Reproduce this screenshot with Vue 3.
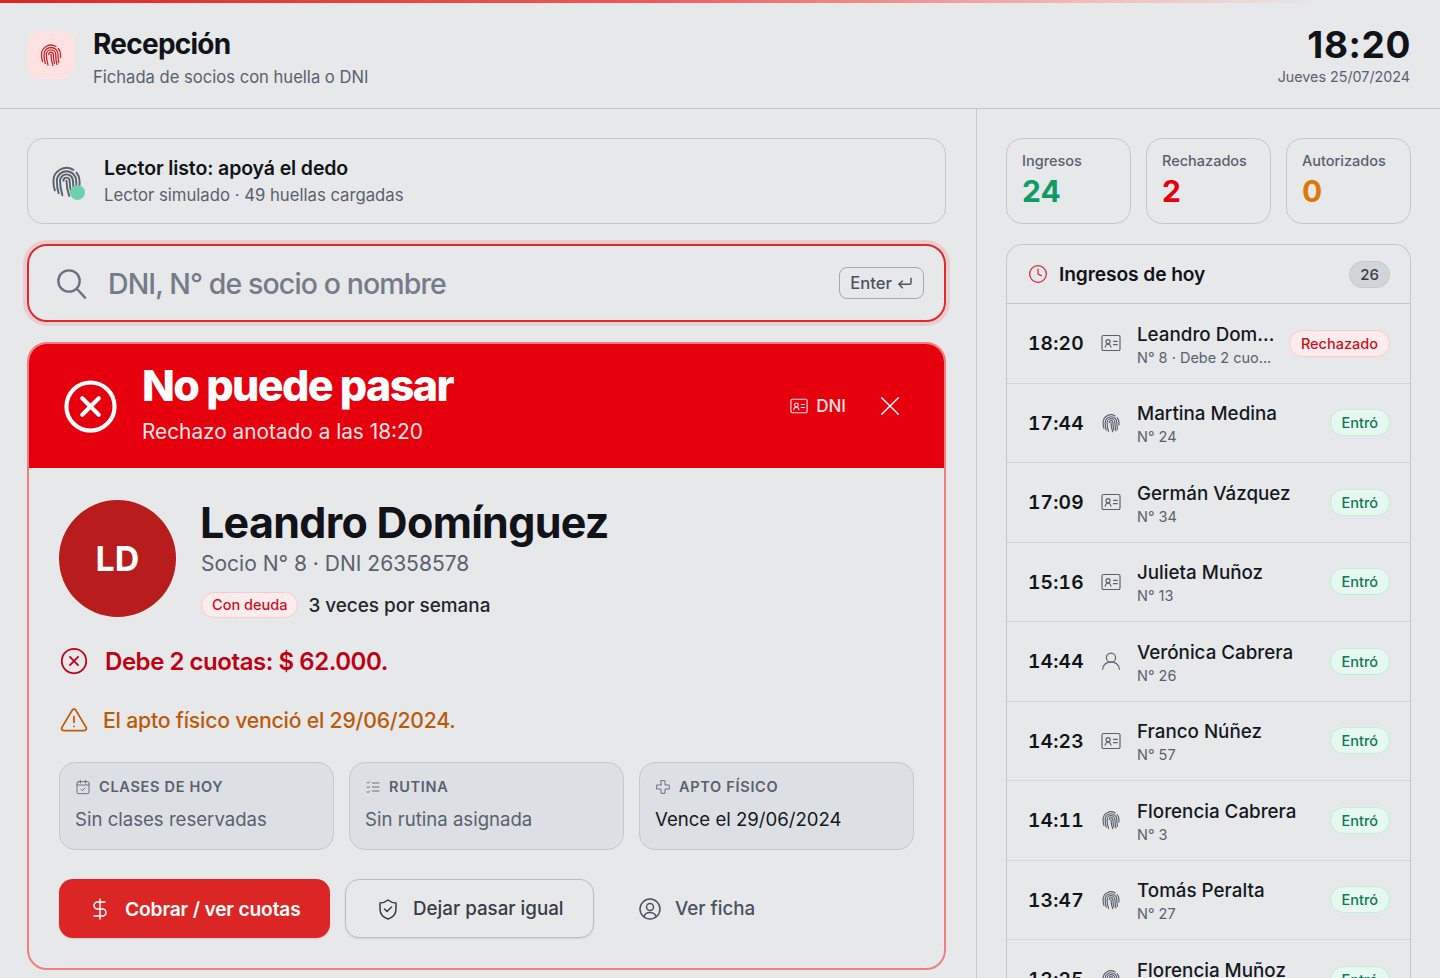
<template>
  <div class="page">
    <header class="top">
      <div class="brand">
        <div class="brand-icon">
          <svg viewBox="0 0 24 24" class="fp"><path v-for="d in fingerprint" :key="d" :d="d" /></svg>
        </div>
        <div>
          <h1>Recepción</h1>
          <p>Fichada de socios con huella o DNI</p>
        </div>
      </div>
      <div class="clock">
        <div class="clock-time">18:20</div>
        <div class="clock-date">Jueves 25/07/2024</div>
      </div>
    </header>

    <div class="layout">
      <main class="main">
        <section class="reader">
          <div class="reader-icon">
            <svg viewBox="0 0 24 24" class="fp"><path v-for="d in fingerprint" :key="d" :d="d" /></svg>
            <span class="dot"></span>
          </div>
          <div>
            <div class="reader-title">Lector listo: apoyá el dedo</div>
            <div class="reader-sub">Lector simulado · 49 huellas cargadas</div>
          </div>
        </section>

        <section class="search">
          <svg viewBox="0 0 24 24" class="search-icon"><circle cx="10.500" cy="10.500" r="8" /><path d="m16.500 16.500 6 6.500" /></svg>
          <span class="search-text">DNI, N° de socio o nombre</span>
          <span class="kbd">Enter
            <svg viewBox="0 0 24 24"><path d="M21 5v7a2 2 0 0 1-2 2H3" /><path d="m8 9-5 5 5 5" /></svg>
          </span>
        </section>

        <section class="result">
          <div class="banner">
            <svg viewBox="0 0 24 24" class="banner-icon"><circle cx="12" cy="12" r="10.500" /><path d="m15.600 8.400-7.200 7.200M8.400 8.400l7.200 7.200" /></svg>
            <div class="banner-text">
              <div class="banner-title">No puede pasar</div>
              <div class="banner-sub">Rechazo anotado a las 18:20</div>
            </div>
            <div class="banner-via">
              <svg viewBox="0 0 24 24"><path v-for="d in idCard" :key="d" :d="d" /></svg>
              DNI
            </div>
            <svg viewBox="0 0 24 24" class="banner-close"><path d="M2 2l20 20M22 2 2 22" /></svg>
          </div>

          <div class="body">
            <div class="member">
              <div class="avatar">LD</div>
              <div>
                <h2>Leandro Domínguez</h2>
                <div class="member-sub">Socio N° 8 · DNI 26358578</div>
                <div class="member-tags">
                  <span class="tag">Con deuda</span>
                  <span class="plan">3 veces por semana</span>
                </div>
              </div>
            </div>

            <div class="warn warn-red">
              <svg viewBox="0 0 24 24"><circle cx="12" cy="12" r="10.500" /><path d="m15.500 8.500-7 7M8.500 8.500l7 7" /></svg>
              Debe 2 cuotas: $ 62.000.
            </div>
            <div class="warn warn-orange">
              <svg viewBox="0 0 24 24"><path d="m22.500 18.500-9-15a1.800 1.800 0 0 0-3 0l-9 15A1.800 1.800 0 0 0 3 21h18a1.800 1.800 0 0 0 1.500-2.500" /><path d="M12 9v5M12 17.500h.01" /></svg>
              El apto físico venció el 29/06/2024.
            </div>

            <div class="infos">
              <div class="info">
                <div class="info-label">
                  <svg viewBox="0 0 24 24"><rect x="3" y="4" width="18" height="18" rx="2" /><path d="M8 2v4M16 2v4M3 9h18M9 15.500l2 2 4-4" /></svg>
                  CLASES DE HOY
                </div>
                <div class="info-value muted">Sin clases reservadas</div>
              </div>
              <div class="info">
                <div class="info-label">
                  <svg viewBox="0 0 24 24"><path d="m3 5 1.500 1.500L7 4M3 12l1.500 1.500L7 11M3 19l1.500 1.500L7 18M11 6h10M11 12h10M11 18h10" /></svg>
                  RUTINA
                </div>
                <div class="info-value muted">Sin rutina asignada</div>
              </div>
              <div class="info">
                <div class="info-label">
                  <svg viewBox="0 0 24 24"><path d="M9 2.500h6v6.500h6.500v6H15v6.500H9V15H2.500V9H9z" /></svg>
                  APTO FÍSICO
                </div>
                <div class="info-value">Vence el 29/06/2024</div>
              </div>
            </div>

            <div class="actions">
              <button class="btn btn-red">
                <svg viewBox="0 0 24 24"><path d="M12 2v20M17 5H9.500a3.500 3.500 0 0 0 0 7h5a3.500 3.500 0 0 1 0 7H6" /></svg>
                Cobrar / ver cuotas
              </button>
              <button class="btn btn-outline">
                <svg viewBox="0 0 24 24"><path d="M4 6c3 0 5.500-1 8-3 2.500 2 5 3 8 3v6c0 5-3.500 8.500-8 10-4.500-1.500-8-5-8-10z" /><path d="m8.500 12 2.500 2.500 4.500-4.500" /></svg>
                Dejar pasar igual
              </button>
              <button class="btn btn-ghost">
                <svg viewBox="0 0 24 24"><circle cx="12" cy="12" r="10" /><circle cx="12" cy="10" r="3.500" /><path d="M6 19.500c.8-2.500 3.200-4 6-4s5.200 1.500 6 4" /></svg>
                Ver ficha
              </button>
            </div>
          </div>
        </section>
      </main>

      <aside class="side">
        <div class="stats">
          <div v-for="s in stats" :key="s.label" class="stat">
            <div class="stat-label">{{ s.label }}</div>
            <div class="stat-value" :class="s.cls">{{ s.value }}</div>
          </div>
        </div>

        <section class="today">
          <div class="today-head">
            <svg viewBox="0 0 24 24"><circle cx="12" cy="12" r="10" /><path d="M12 6v6l4 2" /></svg>
            <span class="today-title">Ingresos de hoy</span>
            <span class="count">26</span>
          </div>
          <div v-for="r in rows" :key="r.time + r.name" class="row">
            <span class="row-time">{{ r.time }}</span>
            <svg v-if="r.via === 'fp'" viewBox="0 0 24 24" class="row-icon"><path v-for="d in fingerprint" :key="d" :d="d" /></svg>
            <svg v-else-if="r.via === 'dni'" viewBox="0 0 24 24" class="row-icon"><path v-for="d in idCard" :key="d" :d="d" /></svg>
            <svg v-else viewBox="0 0 24 24" class="row-icon"><circle cx="12" cy="8" r="5.500" /><path d="M2 22a10 9 0 0 1 20 0" /></svg>
            <div class="row-who">
              <div class="row-name">{{ r.name }}</div>
              <div class="row-sub">{{ r.sub }}</div>
            </div>
            <span class="pill" :class="r.rejected ? 'pill-red' : 'pill-green'">{{ r.rejected ? 'Rechazado' : 'Entró' }}</span>
          </div>
        </section>
      </aside>
    </div>
  </div>
</template>

<script setup>
const fingerprint = [
  'M3.500 18.500C2.800 16.500 2.500 14 2.500 11.500a9.500 9.500 0 0 1 14.500-8',
  'M19.300 5.500a9.500 9.500 0 0 1 2.200 6v3',
  'M6.300 20.500c-1-3-1.300-6-1.300-9a7 7 0 0 1 14 0c0 3 .2 5.500.8 8',
  'M9 22c-1-3.500-1.700-7-1.700-10.500a4.700 4.700 0 0 1 9.400 0c0 3.500.4 7 1.300 10',
  'M12 11.500c0 3.700.6 7.300 2 11',
  'M9.800 11.500c0-1.300 1-2.300 2.200-2.300s2.300 1 2.300 2.300c0 3 .3 6 1.200 9'
]

const idCard = [
  'M3 3h18a1.800 1.800 0 0 1 1.800 1.800v14.400A1.800 1.800 0 0 1 21 21H3a1.800 1.800 0 0 1-1.800-1.800V4.800A1.800 1.800 0 0 1 3 3z',
  'M8.500 8a2.500 2.500 0 1 1 0 5 2.500 2.500 0 0 1 0-5z',
  'M5 17c.5-2.200 1.800-3.500 3.500-3.500S11.500 14.800 12 17',
  'M15 10h4.500M15 14h4.500'
]

const stats = [
  { label: 'Ingresos', value: '24', cls: 'green' },
  { label: 'Rechazados', value: '2', cls: 'red' },
  { label: 'Autorizados', value: '0', cls: 'orange' }
]

const rows = [
  { time: '18:20', via: 'dni', name: 'Leandro Dom...', sub: 'N° 8 · Debe 2 cuo...', rejected: true },
  { time: '17:44', via: 'fp', name: 'Martina Medina', sub: 'N° 24' },
  { time: '17:09', via: 'dni', name: 'Germán Vázquez', sub: 'N° 34' },
  { time: '15:16', via: 'dni', name: 'Julieta Muñoz', sub: 'N° 13' },
  { time: '14:44', via: 'user', name: 'Verónica Cabrera', sub: 'N° 26' },
  { time: '14:23', via: 'dni', name: 'Franco Núñez', sub: 'N° 57' },
  { time: '14:11', via: 'fp', name: 'Florencia Cabrera', sub: 'N° 3' },
  { time: '13:47', via: 'fp', name: 'Tomás Peralta', sub: 'N° 27' },
  { time: '13:25', via: 'fp', name: 'Florencia Muñoz', sub: 'N° 41' }
]
</script>

<style>
html, body {
  margin: 0;
  background: #e6e8ea;
}
</style>

<style scoped>
.page {
  height: 978px;
  overflow: hidden;
  display: flex;
  flex-direction: column;
  background: #e6e8ea;
  color: #111318;
  font-family: Inter, "Liberation Sans", sans-serif;
  position: relative;
}
.page::before {
  content: "";
  position: absolute;
  top: 0;
  left: 0;
  right: 0;
  height: 3px;
  background: linear-gradient(90deg, #dc2626 0%, #ee5a5a 45%, #f3b9b9 75%, #e6e8ea 92%);
}
svg {
  fill: none;
  stroke: currentColor;
  stroke-width: 1.7;
  stroke-linecap: round;
  stroke-linejoin: round;
  flex: none;
}
h1, h2, p {
  margin: 0;
}
.top {
  height: 109px;
  box-sizing: border-box;
  border-bottom: 1px solid #c4c7cc;
  display: flex;
  align-items: center;
  justify-content: space-between;
  padding: 7px 30px 0 27px;
  flex: none;
}
.brand {
  display: flex;
  align-items: center;
  gap: 18px;
}
.brand-icon {
  width: 48px;
  height: 48px;
  margin-bottom: 5px;
  border-radius: 13px;
  background: #fee2e2;
  border: 1px solid #fde5e5;
  box-sizing: border-box;
  display: flex;
  align-items: center;
  justify-content: center;
  color: #c6262b;
}
.brand-icon svg {
  width: 24px;
  height: 24px;
  stroke-width: 1.300;
}
h1 {
  font-size: 28px;
  line-height: 34px;
  font-weight: 700;
  letter-spacing: -0.75px;
}
.brand p {
  margin-top: 4px;
  font-size: 16.600px;
  line-height: 24px;
  color: #5a616d;
}
.clock {
  text-align: right;
  margin-bottom: 3px;
}
.clock-time {
  font-size: 37px;
  line-height: 40px;
  font-weight: 700;
  letter-spacing: 0.6px;
  margin-right: -1px;
}
.clock-date {
  margin-top: 2px;
  font-size: 14.300px;
  line-height: 20px;
  color: #5a616d;
}
.layout {
  flex: 1;
  display: flex;
  min-height: 0;
}
.main {
  width: 977px;
  box-sizing: border-box;
  flex: none;
  border-right: 1px solid #c4c7cc;
  padding: 29px 30px 0 27px;
  display: flex;
  flex-direction: column;
  gap: 20px;
}
.reader {
  height: 86px;
  box-sizing: border-box;
  border: 1px solid #c4c7cc;
  border-radius: 16px;
  display: flex;
  align-items: center;
  gap: 21px;
  padding: 0 22px;
}
.reader-icon {
  position: relative;
  width: 33px;
  height: 33px;
  color: #5a616d;
  margin-top: 1px;
}
.reader-icon svg {
  width: 33px;
  height: 33px;
  display: block;
  stroke-width: 1.400;
}
.dot {
  position: absolute;
  right: -2px;
  bottom: -2px;
  width: 15px;
  height: 15px;
  border-radius: 50%;
  background: #6ed0ac;
}
.reader-title {
  font-size: 19.500px;
  line-height: 28px;
  font-weight: 600;
  letter-spacing: -0.12px;
}
.reader-sub {
  font-size: 16.700px;
  line-height: 26px;
  color: #5a616d;
}
.search {
  height: 78px;
  box-sizing: border-box;
  border: 2px solid #dc2a2e;
  border-radius: 20px;
  box-shadow: 0 0 0 4px #e9cdd0;
  display: flex;
  align-items: center;
  padding: 0 20px 0 26px;
}
.search-icon {
  width: 32px;
  height: 32px;
  color: #6b7280;
  stroke-width: 1.800;
}
.search-text {
  margin-left: 21px;
  font-size: 28.500px;
  font-weight: 500;
  color: #757b89;
  letter-spacing: -0.9px;
  flex: 1;
}
.kbd {
  height: 32px;
  box-sizing: border-box;
  border: 1px solid #a4a8af;
  border-radius: 8px;
  padding: 0 10px;
  display: flex;
  align-items: center;
  gap: 5px;
  font-size: 16.600px;
  font-weight: 500;
  color: #4b5260;
}
.kbd svg {
  width: 16px;
  height: 16px;
  stroke-width: 2.200;
}
.result {
  height: 628px;
  box-sizing: border-box;
  border: 2px solid #f07f7f;
  border-radius: 20px;
  overflow: hidden;
}
.banner {
  height: 124px;
  background: #e6000d;
  color: #fff;
  display: flex;
  align-items: center;
  padding: 0 44px 0 34px;
}
.banner-icon {
  width: 55px;
  height: 55px;
  stroke-width: 1.800;
}
.banner-text {
  margin-left: 24px;
  flex: 1;
}
.banner-title {
  font-size: 43px;
  line-height: 50px;
  font-weight: 800;
  letter-spacing: -1.600px;
  margin-top: -6px;
}
.banner-sub {
  font-size: 20.800px;
  line-height: 30px;
  margin-top: 7px;
  color: #fde5e5;
}
.banner-via {
  display: flex;
  align-items: center;
  gap: 8px;
  font-size: 17px;
  font-weight: 500;
  margin-right: 34px;
  color: #fee2e2;
}
.banner-via svg {
  width: 18px;
  height: 18px;
  stroke-width: 1.500;
}
.banner-close {
  width: 20px;
  height: 20px;
  stroke-width: 1.700;
}
.body {
  padding: 32px 30px 0 30px;
}
.member {
  display: flex;
  align-items: flex-start;
  gap: 25px;
}
.avatar {
  width: 117px;
  height: 117px;
  border-radius: 50%;
  background: #b91c1c;
  color: #fff;
  display: flex;
  align-items: center;
  justify-content: center;
  font-size: 34px;
  font-weight: 700;
  flex: none;
}
h2 {
  font-size: 43px;
  line-height: 46px;
  font-weight: 700;
  letter-spacing: -0.7px;
  margin-left: -1px;
  margin-top: -1px;
}
.member-sub {
  margin-top: 4px;
  font-size: 21px;
  line-height: 30px;
  color: #5a616d;
}
.member-tags {
  margin-top: 13px;
  display: flex;
  align-items: center;
  gap: 10px;
}
.tag {
  height: 26px;
  box-sizing: border-box;
  padding: 0 10px;
  border: 1px solid #fecaca;
  background: #fdeced;
  border-radius: 13px;
  font-size: 14.500px;
  line-height: 24px;
  font-weight: 500;
  color: #c9101b;
}
.plan {
  font-size: 18.900px;
  font-weight: 500;
  color: #22262e;
}
.warn {
  display: flex;
  align-items: center;
}
.warn svg {
  width: 28px;
  height: 28px;
  margin-left: 1px;
  stroke-width: 1.500;
}
.warn-red {
  margin-top: 25px;
  height: 36px;
  gap: 17px;
  font-size: 24px;
  font-weight: 600;
  letter-spacing: -0.45px;
  color: #c00013;
}
.warn-orange {
  margin-top: 23px;
  height: 36px;
  gap: 15px;
  font-size: 21.200px;
  font-weight: 500;
  letter-spacing: -0.2px;
  color: #bd5a08;
}
.infos {
  margin-top: 24px;
  display: grid;
  grid-template-columns: repeat(3, 1fr);
  gap: 15px;
}
.info {
  height: 88px;
  box-sizing: border-box;
  border: 1px solid #c4c7cc;
  border-radius: 16px;
  background: #dcdfe4;
  padding: 14px 15px;
}
.info-label {
  display: flex;
  align-items: center;
  gap: 8px;
  font-size: 14.500px;
  line-height: 20px;
  font-weight: 600;
  letter-spacing: 0.7px;
  color: #5a616d;
}
.info-label svg {
  width: 16px;
  height: 16px;
  stroke-width: 1.300;
}
.info-value {
  margin-top: 8px;
  font-size: 18.600px;
  line-height: 28px;
  color: #15181e;
}
.info-value.muted {
  color: #5a616d;
}
.actions {
  margin-top: 29px;
  display: flex;
  align-items: center;
  gap: 15px;
}
.btn {
  height: 59px;
  box-sizing: border-box;
  border-radius: 14px;
  border: 1px solid transparent;
  display: flex;
  align-items: center;
  font-family: inherit;
  font-size: 18.750px;
  font-weight: 500;
  background: none;
  padding: 0;
}
.btn svg {
  width: 24px;
  height: 24px;
  stroke-width: 1.500;
}
.btn-red {
  width: 271px;
  background: #dc2626;
  color: #fff;
  font-size: 19.300px;
  font-weight: 600;
  letter-spacing: -0.2px;
  gap: 13px;
  padding-left: 28px;
  box-shadow: 0 1px 2px rgba(0, 0, 0, 0.12);
}
.btn-outline {
  width: 249px;
  border-color: #b9bcc2;
  color: #373c45;
  gap: 13px;
  padding-left: 30px;
  box-shadow: 0 1px 2px rgba(0, 0, 0, 0.1);
}
.btn-ghost {
  color: #4b5260;
  gap: 13px;
  padding-left: 28px;
}
.side {
  flex: 1;
  min-width: 0;
  padding: 29px 29px 0 29px;
}
.stats {
  display: grid;
  grid-template-columns: repeat(3, 1fr);
  gap: 15px;
}
.stat {
  height: 86px;
  box-sizing: border-box;
  border: 1px solid #c4c7cc;
  border-radius: 16px;
  padding: 12px 15px;
}
.stat-label {
  font-size: 14.500px;
  line-height: 20px;
  font-weight: 500;
  color: #5a616d;
}
.stat-value {
  margin-top: 3px;
  font-size: 30px;
  line-height: 34px;
  font-weight: 700;
}
.green {
  color: #0f9a66;
}
.red {
  color: #e6000d;
}
.orange {
  color: #dd7706;
}
.today {
  margin-top: 20px;
  border: 1px solid #c4c7cc;
  border-bottom: 0;
  border-radius: 16px 16px 0 0;
}
.today-head {
  height: 59px;
  box-sizing: border-box;
  display: flex;
  align-items: center;
  padding: 0 20px 0 21px;
  border-bottom: 1px solid #c4c7cc;
}
.today-head svg {
  width: 20px;
  height: 20px;
  color: #d12a30;
  stroke-width: 1.500;
}
.today-title {
  margin-left: 11px;
  flex: 1;
  font-size: 19.200px;
  font-weight: 600;
  letter-spacing: -0.1px;
}
.count {
  width: 41px;
  height: 27px;
  box-sizing: border-box;
  border: 1px solid #c4c7cc;
  border-radius: 14px;
  background: #d1d5da;
  text-align: center;
  font-size: 15px;
  line-height: 25px;
  font-weight: 500;
  color: #373c45;
}
.row {
  height: 79.500px;
  box-sizing: border-box;
  border-bottom: 1px solid #d2d5da;
  display: flex;
  align-items: center;
  padding: 0 20px 0 21px;
}
.row-time {
  width: 55px;
  font-size: 19.200px;
  font-weight: 600;
  letter-spacing: 0.2px;
  font-variant-numeric: tabular-nums;
}
.row-icon {
  width: 20px;
  height: 20px;
  margin-left: 18px;
  color: #5a616d;
  stroke-width: 1.400;
}
.row-who {
  margin-left: 16px;
  padding-top: 2px;
  flex: 1;
  min-width: 0;
}
.row-name {
  font-size: 18.800px;
  line-height: 27px;
  font-weight: 500;
  color: #15181e;
  white-space: nowrap;
}
.row-sub {
  font-size: 14.500px;
  line-height: 20px;
  color: #5a616d;
  white-space: nowrap;
}
.pill {
  height: 27px;
  box-sizing: border-box;
  border-radius: 14px;
  padding: 0 11px;
  font-size: 14.500px;
  line-height: 25px;
  font-weight: 500;
  border: 1px solid;
  flex: none;
}
.pill-red {
  background: #fdeced;
  border-color: #fecaca;
  color: #c9101b;
}
.pill-green {
  background: #e6f8f0;
  border-color: #bcf0d9;
  color: #0c7a55;
}
</style>
